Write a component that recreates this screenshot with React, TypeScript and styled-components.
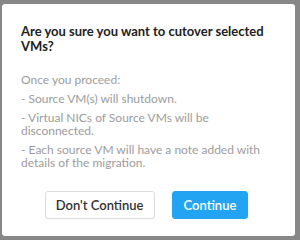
import * as React from 'react';
import styled, { createGlobalStyle } from 'styled-components';

const GlobalStyle = createGlobalStyle`
	html, body {
		margin: 0;
		padding: 0;
		background: #878787;
		width: 300px;
		height: 240px;
		overflow: hidden;
	}
	#root {
		padding: 4px 5px 4px 2px;
	}
`;

const Dialog = styled.div`
	box-sizing: border-box;
	width: 293px;
	height: 232px;
	background: #ffffff;
	border-radius: 3px;
	padding: 20px 19px 0 19px;
	display: flex;
	flex-direction: column;
	font-family: Lato, 'Liberation Sans', sans-serif;
`;

const Title = styled.div`
	font-size: 13px;
	font-weight: 700;
	line-height: 15px;
	color: #222;
	margin-bottom: 19px;
`;

const Body = styled.div`
	display: flex;
	flex-direction: column;
	gap: 6px;
	color: #9c9c9c;
	font-size: 12px;
	line-height: 13px;
`;

const Paragraph = styled.div``;

const Footer = styled.div`
	display: flex;
	justify-content: center;
	gap: 17px;
	margin-top: 22px;
	padding-right: 4px;
`;

const Button = styled.button<{ $primary?: boolean }>`
	box-sizing: border-box;
	height: 28px;
	padding: 0 ${props => props.$primary ? 11 : 10}px;
	border-radius: 3px;
	font-family: Lato, 'Liberation Sans', sans-serif;
	font-size: 13px;
	font-weight: 600;
	border: 1px solid ${props => props.$primary ? '#22a4f2' : '#dcdcdc'};
	background: ${props => props.$primary ? '#22a4f2' : '#ffffff'};
	color: ${props => props.$primary ? '#ffffff' : '#333333'};
`;

export default function App() {
	return (
		<>
			<GlobalStyle />
			<Dialog>
				<Title>Are you sure you want to cutover selected VMs?</Title>
				<Body>
					<Paragraph>Once you proceed:</Paragraph>
					<Paragraph>- Source VM(s) will shutdown.</Paragraph>
					<Paragraph>- Virtual NICs of Source VMs will be disconnected.</Paragraph>
					<Paragraph>- Each source VM will have a note added with details of the migration.</Paragraph>
				</Body>
				<Footer>
					<Button>Don't Continue</Button>
					<Button $primary>Continue</Button>
				</Footer>
			</Dialog>
		</>
	);
}
